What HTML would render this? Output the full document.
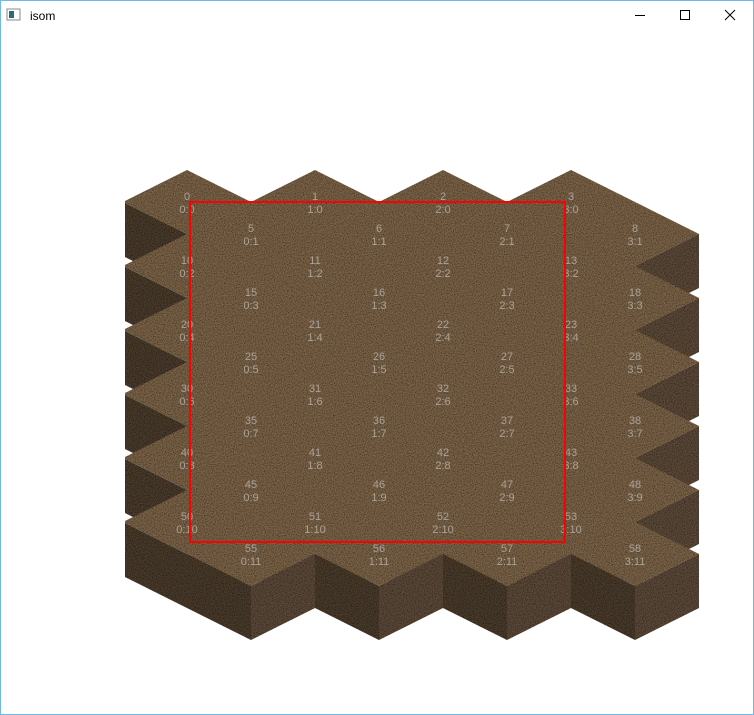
<!DOCTYPE html>
<html><head><meta charset="utf-8"><style>
html,body{margin:0;padding:0;background:#fff;width:754px;height:715px;overflow:hidden}
.win{position:absolute;left:0;top:0;width:752px;height:713px;border:1px solid #6fb8e8;background:#fff}
</style></head><body>
<div class="win"></div>
<svg width="754" height="715" style="position:absolute;left:0;top:0" xmlns="http://www.w3.org/2000/svg">
<defs>
<filter id="n" x="0" y="0" width="100%" height="100%">
<feTurbulence type="fractalNoise" baseFrequency="0.9" numOctaves="2" seed="3" result="t"/>
<feColorMatrix in="t" type="matrix" values="0 0 0 0 0  0 0 0 0 0  0 0 0 0 0  0 0 0 -1.6 1.05" result="a"/>
<feComposite in="a" in2="SourceGraphic" operator="in" result="d"/>
<feMerge><feMergeNode in="SourceGraphic"/><feMergeNode in="d"/></feMerge>
</filter>
<clipPath id="c"><rect x="125" y="0" width="576" height="715"/></clipPath>
</defs>
<!-- title bar -->
<rect x="7" y="9" width="13" height="11" fill="none" stroke="#8a8a8a"/>
<rect x="9" y="11" width="5" height="7" fill="#2d6b7a"/>
<text x="30" y="20" font-family="Liberation Sans, sans-serif" font-size="12" fill="#000">isom</text>
<line x1="635" y1="15.5" x2="645" y2="15.5" stroke="#000"/>
<rect x="680.5" y="10.5" width="9" height="9" fill="none" stroke="#000"/>
<path d="M725 10 L735 20 M735 10 L725 20" stroke="#000"/>
<g id="map" clip-path="url(#c)" filter="url(#n)"></g>
<g id="lbl" font-family="Liberation Sans, sans-serif" font-size="11" fill="#aaa39a" text-anchor="middle"></g>
<rect x="190" y="202" width="375" height="340" fill="none" stroke="#f00" stroke-width="2"/>
</svg>
<script>
var m=document.getElementById('map'),l=document.getElementById('lbl'),s='',t='',D=54;
for(var r=0;r<12;r++){for(var c=0;c<4;c++){
var cx=187+128*c+(r%2?64:0),cy=202+32*r;
s+='<polygon points="'+(cx-64)+','+cy+' '+cx+','+(cy+32)+' '+cx+','+(cy+32+D)+' '+(cx-64)+','+(cy+D)+'" fill="#4c3e2f"/>';
s+='<polygon points="'+(cx+64)+','+cy+' '+cx+','+(cy+32)+' '+cx+','+(cy+32+D)+' '+(cx+64)+','+(cy+D)+'" fill="#5d4c3a"/>';
s+='<polygon points="'+(cx-64)+','+cy+' '+cx+','+(cy-32)+' '+(cx+64)+','+cy+' '+cx+','+(cy+32)+'" fill="#7d6549"/>';
t+='<text x="'+cx+'" y="'+(cy-2)+'">'+(r*5+c)+'</text><text x="'+cx+'" y="'+(cy+11)+'">'+c+':'+r+'</text>';
}}
m.innerHTML=s;l.innerHTML=t;
</script>
</body></html>
